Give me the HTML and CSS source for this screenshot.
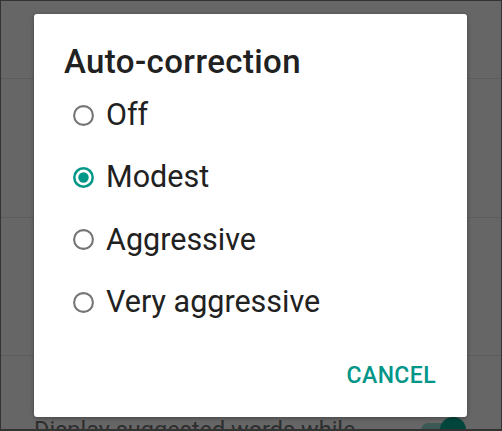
FILE: index.html
```html
<!DOCTYPE html>
<html lang="en">
<head>
<meta charset="utf-8">
<title>Auto-correction</title>
<link rel="stylesheet" href="styles.css">
</head>
<body>
<div class="screen">
  <div class="settings">
    <div class="row row-1"></div>
    <div class="row row-2"></div>
    <div class="row row-3"></div>
    <div class="row row-4">
      <span class="summary">Display suggested words while</span>
      <span class="toggle"><span class="track"></span><span class="thumb"></span></span>
    </div>
  </div>

  <div class="dialog" role="dialog" aria-labelledby="dlg-title">
    <h1 class="title" id="dlg-title">Auto-correction</h1>
    <ul class="options">
      <li class="option">
        <svg class="radio" viewBox="0 0 21 21" width="21" height="21"><circle cx="10.5" cy="10.5" r="9.4" fill="none" stroke="#757575" stroke-width="2.1"/></svg>
        <span class="label">Off</span>
      </li>
      <li class="option">
        <svg class="radio" viewBox="0 0 21 21" width="21" height="21"><circle cx="10.5" cy="10.5" r="9.2" fill="none" stroke="#009688" stroke-width="2.5"/><circle cx="10.5" cy="10.5" r="5.2" fill="#009688"/></svg>
        <span class="label">Modest</span>
      </li>
      <li class="option">
        <svg class="radio" viewBox="0 0 21 21" width="21" height="21"><circle cx="10.5" cy="10.5" r="9.4" fill="none" stroke="#757575" stroke-width="2.1"/></svg>
        <span class="label">Aggressive</span>
      </li>
      <li class="option">
        <svg class="radio" viewBox="0 0 21 21" width="21" height="21"><circle cx="10.5" cy="10.5" r="9.4" fill="none" stroke="#757575" stroke-width="2.1"/></svg>
        <span class="label">Very aggressive</span>
      </li>
    </ul>
    <div class="actions">
      <button class="btn" type="button">CANCEL</button>
    </div>
  </div>
</div>
</body>
</html>
```

FILE: styles.css
```css
* { box-sizing: border-box; }

html, body {
  margin: 0;
  padding: 0;
  background: #2f2f2f;
}

.screen {
  position: relative;
  width: 502px;
  height: 431px;
  overflow: hidden;
  background: #666666;
  border-style: solid;
  border-color: #333333;
  border-width: 1px 1px 2px 1px;
  font-family: Roboto, "Noto Sans", "Liberation Sans", sans-serif;
}

.settings {
  display: flex;
  flex-direction: column;
}

.row {
  border-bottom: 1px solid #5c5c5c;
  flex: none;
}

.row-1 { height: 78px; }
.row-2 { height: 139px; }
.row-3 { height: 138px; }

.row-4 {
  border-bottom: none;
  display: flex;
  justify-content: space-between;
  align-items: flex-start;
  padding: 61px 35px 0 33px;
}

.summary {
  font-size: 23.5px;
  line-height: 26px;
  color: #2e2e2e;
  white-space: nowrap;
}

.toggle {
  position: relative;
  width: 45px;
  height: 26px;
  flex: none;
}

.track {
  position: absolute;
  left: 0;
  right: 2px;
  top: 6px;
  height: 14px;
  border-radius: 7px;
  background: #3d5955;
}

.thumb {
  position: absolute;
  right: 0;
  top: 0;
  width: 26px;
  height: 26px;
  border-radius: 50%;
  background: #00463c;
}

.dialog {
  position: absolute;
  left: 33px;
  top: 13px;
  width: 433px;
  height: 403px;
  background: #ffffff;
  border-radius: 3px;
  box-shadow: 0 1px 4px rgba(0, 0, 0, 0.35);
  padding-top: 28px;
}

.title {
  margin: 0;
  padding-left: 30px;
  font-size: 33px;
  line-height: 40px;
  font-weight: 500;
  letter-spacing: 0.4px;
  color: #212121;
}

.options {
  list-style: none;
  margin: 2px 0 0;
  padding: 0 0 0 39px;
}

.option {
  display: flex;
  align-items: center;
  gap: 12px;
  height: 62.33px;
}

.radio {
  flex: none;
  display: block;
}

.label {
  font-size: 30.5px;
  line-height: 36px;
  color: #212121;
}

.actions {
  display: flex;
  justify-content: flex-end;
  padding: 31px 31px 0 0;
}

.btn {
  border: none;
  background: none;
  padding: 0;
  font-family: inherit;
  font-size: 23px;
  line-height: 24px;
  font-weight: 500;
  letter-spacing: 0.4px;
  color: #009688;
}
```
